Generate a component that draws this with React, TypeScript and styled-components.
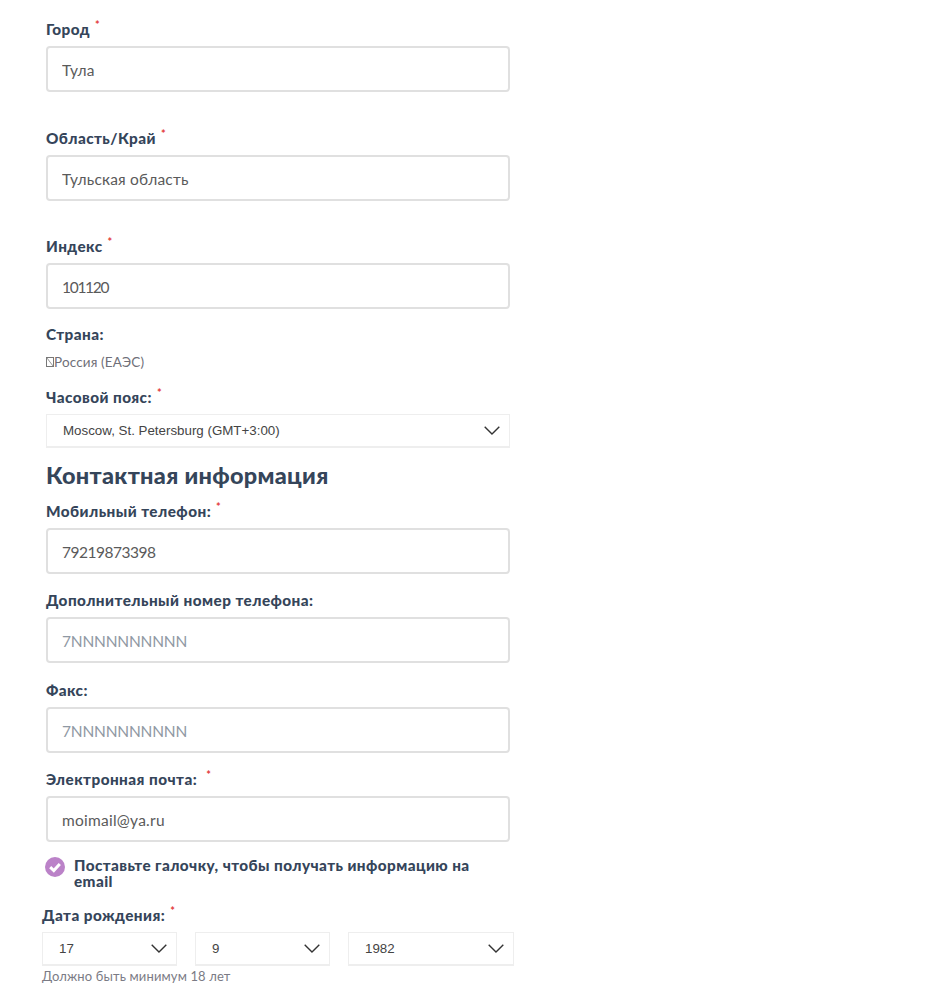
import styled, { createGlobalStyle } from "styled-components";

const GlobalStyle = createGlobalStyle`
  html, body {
    margin: 0;
    background: #fff;
    font-family: "Lato", "Noto Sans", sans-serif;
    color: #35455a;
  }
`;

const Page = styled.div`
  width: 464px;
  padding: 19px 0 0 46px;
  display: flex;
  flex-direction: column;
`;

const Field = styled.div<{ $bottom?: number }>`
  display: flex;
  flex-direction: column;
  margin-bottom: ${(p) => p.$bottom ?? 0}px;
`;

const Label = styled.label`
  font-size: 15.3px;
  font-weight: 900;
  line-height: 20px;
  height: 20px;
  margin-bottom: 7px;
  letter-spacing: 0.45px;
  white-space: nowrap;
  color: #35455a;
`;

const Star = styled.sup`
  color: #e33a3a;
  font-size: 11px;
  font-weight: 700;
  line-height: 0;
  margin-left: 5px;
  vertical-align: 6px;
`;

const Input = styled.input<{ $spacing?: number }>`
  box-sizing: border-box;
  width: 464px;
  height: 46px;
  padding: 2px 14px 0;
  border: 2px solid #e0e0e0;
  border-radius: 4px;
  background: #fff;
  font-family: inherit;
  font-size: 15.5px;
  letter-spacing: ${(p) => p.$spacing ?? 0.2}px;
  color: #5a5a5a;
  outline: none;

  &::placeholder {
    color: #8f98a3;
    opacity: 1;
  }
`;

const SelectBox = styled.div<{ $width: number }>`
  box-sizing: border-box;
  flex-shrink: 0;
  width: ${(p) => p.$width}px;
  height: 34px;
  padding: 0 9px 0 16px;
  border: 1px solid #eeeeee;
  border-bottom-width: 2px;
  display: flex;
  align-items: center;
  justify-content: space-between;
  font-family: "Liberation Sans", Arial, sans-serif;
  font-size: 13.33px;
  color: #444;
`;

const Chevron = () => (
  <svg width="16" height="9" viewBox="0 0 16 9" fill="none">
    <path d="M0.7 0.8 L8 8 L15.3 0.8" stroke="#333" strokeWidth="1.4" />
  </svg>
);

const Country = styled.div`
  display: flex;
  align-items: center;
  height: 20px;
  margin: 1px 0 15px;
  font-size: 13.5px;
  color: #6f6f78;
  letter-spacing: 0.15px;
`;

const Tofu = () => (
  <svg width="8" height="10" viewBox="0 0 8 10" fill="none">
    <rect x="0.5" y="0.5" width="7" height="9" stroke="#777" />
    <path d="M1 1 L7 9" stroke="#999" />
  </svg>
);

const Heading = styled.h2`
  margin: 12px 0 11px;
  font-size: 23.5px;
  line-height: 30px;
  font-weight: 900;
  color: #35455a;
  letter-spacing: 0.3px;
`;

const CheckRow = styled.div`
  display: flex;
  gap: 8px;
  margin: 15px 0 16px;
`;

const CheckIcon = () => (
  <svg width="20" height="20" viewBox="0 0 20 20" style={{ flexShrink: 0, marginLeft: -1, marginRight: 1 }}>
    <circle cx="10" cy="10" r="10" fill="#bb82c8" />
    <path d="M5.2 10.2 L8.8 13.6 L14.8 7" fill="none" stroke="#fff" strokeWidth="3" />
  </svg>
);

const CheckText = styled.div`
  font-size: 15.3px;
  font-weight: 900;
  line-height: 16px;
  letter-spacing: 0.42px;
  color: #35455a;
  width: 420px;
`;

const DateBlock = styled.div`
  margin-left: -4px;
  display: flex;
  flex-direction: column;
`;

const DateRow = styled.div`
  display: flex;
  gap: 18px;
`;

const Hint = styled.div`
  margin-top: 1px;
  font-size: 13px;
  line-height: 18px;
  letter-spacing: 0.13px;
  color: #7b7b85;
`;

export default function App() {
  return (
    <>
      <GlobalStyle />
      <Page>
        <Field $bottom={36}>
          <Label>Город<Star>*</Star></Label>
          <Input defaultValue="Тула" />
        </Field>
        <Field $bottom={35}>
          <Label>Область/Край<Star>*</Star></Label>
          <Input defaultValue="Тульская область" />
        </Field>
        <Field $bottom={15}>
          <Label>Индекс<Star>*</Star></Label>
          <Input defaultValue="101120" $spacing={-1.3} />
        </Field>
        <Field>
          <Label>Страна:</Label>
          <Country><Tofu />Россия (ЕАЭС)</Country>
        </Field>
        <Field>
          <Label>Часовой пояс:<Star>*</Star></Label>
          <SelectBox $width={464}>
            Moscow, St. Petersburg (GMT+3:00)
            <Chevron />
          </SelectBox>
        </Field>
        <Heading>Контактная информация</Heading>
        <Field $bottom={16}>
          <Label>Мобильный телефон:<Star>*</Star></Label>
          <Input defaultValue="79219873398" $spacing={-0.5} />
        </Field>
        <Field $bottom={17}>
          <Label>Дополнительный номер телефона:</Label>
          <Input placeholder="7NNNNNNNNNN" $spacing={-0.2} />
        </Field>
        <Field $bottom={16}>
          <Label>Факс:</Label>
          <Input placeholder="7NNNNNNNNNN" $spacing={-0.2} />
        </Field>
        <Field>
          <Label>Электронная почта: <Star>*</Star></Label>
          <Input defaultValue="moimail@ya.ru" $spacing={0.25} />
        </Field>
        <CheckRow>
          <CheckIcon />
          <CheckText>Поставьте галочку, чтобы получать информацию на email</CheckText>
        </CheckRow>
        <DateBlock>
          <Label>Дата рождения:<Star>*</Star></Label>
          <DateRow>
            <SelectBox $width={135}>17<Chevron /></SelectBox>
            <SelectBox $width={135}>9<Chevron /></SelectBox>
            <SelectBox $width={166}>1982<Chevron /></SelectBox>
          </DateRow>
          <Hint>Должно быть минимум 18 лет</Hint>
        </DateBlock>
      </Page>
    </>
  );
}
